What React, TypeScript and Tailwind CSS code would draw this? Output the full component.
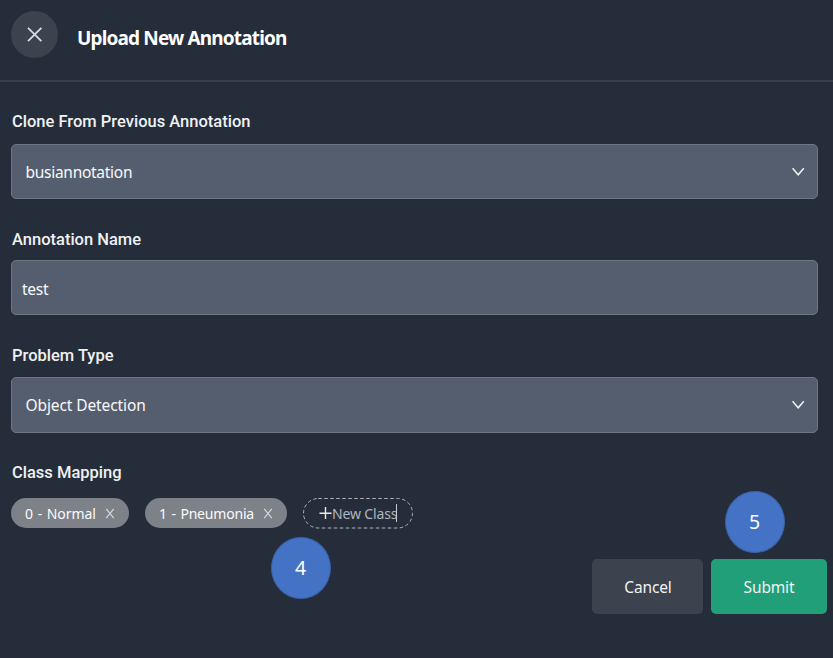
import React from "react";

const UI = "font-['Noto_Sans','Open_Sans',sans-serif]";

function Chevron() {
  return (
    <svg width="14" height="10" viewBox="0 0 14 10" fill="none" stroke="#f1f3f5" strokeWidth="1.5">
      <path d="M1.6 1.2 7.2 7.8l5.6-6.6" />
    </svg>
  );
}

function Label({ children, className = "leading-[21px]" }: { children: React.ReactNode; className?: string }) {
  return (
    <div className={`h-5 pl-px font-['Roboto',sans-serif] text-[16.5px] font-medium whitespace-nowrap text-[#eff1f3] ${className}`}>
      {children}
    </div>
  );
}

function Field({ value, className, select = false }: { value: string; className: string; select?: boolean }) {
  return (
    <div
      className={`flex w-[807px] items-center justify-between rounded-[5px] border border-[#6d7783] bg-[#555e6e] pr-3 text-[#f8f9fa] ${className} ${select ? "pl-[13.5px]" : "pl-[10px]"}`}
    >
      <span className="text-[15.5px] leading-5 font-[450] whitespace-nowrap">{value}</span>
      {select && <Chevron />}
    </div>
  );
}

function Tag({ children, className, textClass }: { children: string; className: string; textClass: string }) {
  return (
    <div className={`flex h-[30px] items-center justify-between rounded-full bg-[#7d8188] pr-[14px] pl-[14px] text-[#fbfbfb] ${className}`}>
      <span className={`pt-[2px] text-[14px] leading-5 whitespace-nowrap ${textClass}`}>{children}</span>
      <svg width="10" height="11" viewBox="0 0 10 11" fill="none" stroke="#d6d9dc" strokeWidth="1.2">
        <path d="m1.2 .8 7.6 9.4M8.8.8 1.2 10.2" />
      </svg>
    </div>
  );
}

function Step({ children, className }: { children: string; className: string }) {
  return (
    <div className={`absolute flex h-[62px] w-[60px] items-center justify-center rounded-[50%] border border-[#3a62a9] bg-[#4472c4] pr-px pb-px text-[19.5px] leading-5 text-white ${className}`}>
      {children}
    </div>
  );
}

export default function App() {
  return (
    <div className={`relative h-[658px] w-[833px] overflow-hidden bg-[#262d3a] ${UI}`}>
      <header className="flex h-[82px] border-b-2 border-[#364150] pt-[11px] pl-[11px]">
        <button className="flex size-[47px] items-center justify-center rounded-full bg-[#3c424e]">
          <svg width="16" height="16" viewBox="0 0 16 16" fill="none" stroke="#d2deea" strokeWidth="1.8">
            <path d="m1 .8 13.4 13.4M14.4.8 1 14.2" />
          </svg>
        </button>
        <h1 className="mt-[15px] ml-[19px] text-[19px] leading-6 font-bold tracking-[-0.85px] whitespace-nowrap text-white">
          Upload New Annotation
        </h1>
      </header>

      <main className="flex flex-col pt-[30px] pl-[11px]">
        <Label className="leading-5">Clone From Previous Annotation</Label>
        <div className="mt-3">
          <Field select value="busiannotation" className="h-[55px] tracking-[-0.28px]" />
        </div>
        <div className="mt-[30px]">
          <Label>Annotation Name</Label>
        </div>
        <div className="mt-[11px]">
          <Field value="test" className="h-[55px] pt-[2px] tracking-[-0.25px]" />
        </div>
        <div className="mt-[30px]">
          <Label>Problem Type</Label>
        </div>
        <div className="mt-3">
          <Field select value="Object Detection" className="h-[56px] tracking-[-0.1px]" />
        </div>
        <div className="mt-[30px]">
          <Label className="leading-5">Class Mapping</Label>
        </div>
        <div className="mt-[15px] flex">
          <Tag className="w-[118px]" textClass="tracking-[-0.1px] [word-spacing:1.2px]">0 - Normal</Tag>
          <Tag className="ml-4 w-[142px]" textClass="tracking-[-0.2px] [word-spacing:1.2px]">1 - Pneumonia</Tag>
          <div className="relative ml-4 flex h-[31px] w-[110px] items-center pl-4 text-[#aeb5bf]">
            <svg className="absolute inset-0" width="110" height="31" fill="none" stroke="#adb4bd" strokeDasharray="3.5 2.5">
              <rect x="0.5" y="0.5" width="109" height="29.5" rx="14.75" />
            </svg>
            <svg width="13" height="13" viewBox="0 0 13 13" stroke="#e7e9ec" strokeWidth="1.4">
              <path d="M6.5 0v12M.5 6.2h12" />
            </svg>
            <span className="pt-px text-[14px] leading-5 tracking-[-0.15px] whitespace-nowrap">New Class</span>
            <i className="absolute top-[6px] left-[93px] h-[18px] w-px bg-[#c5cad1]" />
          </div>
        </div>
      </main>

      <footer className="mt-[30px] flex justify-end gap-[8px] pr-[6px] text-[15.5px] leading-5 font-[450] tracking-[-0.15px] text-[#f2f4f6]">
        <button className="h-[55px] w-[111px] rounded-[5px] bg-[#3c424e] pl-px">Cancel</button>
        <button className="h-[55px] w-[116px] rounded-[5px] bg-[#209f79]">Submit</button>
      </footer>

      <Step className="top-[537px] left-[271px]">4</Step>
      <Step className="top-[491px] left-[725px]">5</Step>
    </div>
  );
}
